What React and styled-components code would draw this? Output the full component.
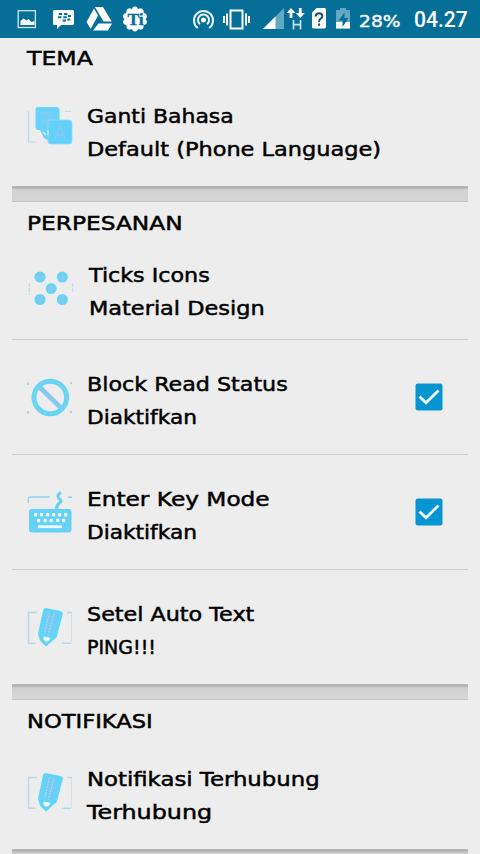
import React, { useLayoutEffect, useRef, useState } from "react";
import styled, { createGlobalStyle } from "styled-components";

const Global = createGlobalStyle`
  body { margin: 0; background: #ededed; overflow: hidden; }
  * { box-sizing: border-box; }
`;

const Screen = styled.div`
  width: 480px;
  height: 854px;
  overflow: hidden;
  background: #ededed;
  color: #000;
  font-family: "DejaVu Sans", sans-serif;
  font-size: 20px;
`;

const StatusBar = styled.header`
  height: 37px;
  background: #056f98;
  box-shadow: 0 1px 0 #056f98;
  display: flex;
  color: #fff;
`;

const StatusIcons = styled.svg`
  width: 357px;
  height: 37px;
  flex: none;
  display: block;
`;

const Battery = styled.span`
  width: 57px;
  padding-left: 2px;
  padding-top: 4px;
  line-height: 36px;
  font-size: 16px;
`;

const Clock = styled.span`
  font-family: Roboto, sans-serif;
  font-weight: 500;
  font-size: 21.5px;
  line-height: 40px;
`;

const List = styled.main`
  padding: 0 12px;
`;

const SectionTitle = styled.h2`
  margin: 0;
  height: 35px;
  padding: 7px 0 0 15px;
  font-size: 20px;
  font-weight: 400;
  line-height: 28px;
`;

const Row = styled.div`
  display: flex;
  align-items: center;
  height: ${(p) => (p.$compact ? 102 : 114)}px;
  padding: 0 25px 0 14px;
`;

const Divider = styled.hr`
  margin: 0;
  border: 0;
  height: 1px;
  background: #cfcfcf;
`;

const Band = styled.div`
  height: 16px;
  background: linear-gradient(#b9b9b9 0, #aeaeae 2px, #c8c8c8 3px, #d3d3d3 5px, #d5d5d5 14.5px, #c4c4c4 15px, #c9c9c9 16px);
`;

const RowIcon = styled.svg`
  width: 48px;
  height: 48px;
  flex: none;
`;

const Labels = styled.div`
  flex: 1;
  padding: 7px 0 0 ${(p) => (p.$inset ? 15 : 13)}px;
`;

const Line = styled.div`
  height: 33px;
  line-height: 33px;
`;

const Stretched = styled.span`
  display: inline-block;
  white-space: nowrap;
  transform-origin: 0 50%;
  -webkit-text-stroke: ${(p) => p.$stroke}px currentColor;
`;

const CheckBox = styled.svg`
  width: 28px;
  height: 28px;
  flex: none;
`;

// Widens the text horizontally until it spans the given width.
function Fit({ width, stroke = 0.5, children }) {
  const ref = useRef(null);
  const [scale, setScale] = useState(1);
  useLayoutEffect(() => {
    setScale(width / ref.current.offsetWidth);
  }, [width]);
  return (
    <Stretched ref={ref} $stroke={stroke} style={{ transform: `scaleX(${scale})` }}>
      {children}
    </Stretched>
  );
}

function LanguageIcon() {
  return (
    <RowIcon viewBox="26 105 48 48">
      <path d="M28.5 111v31h8M65 111.500h6" fill="none" stroke="#b9dcea" strokeWidth="1.2" />
      <rect x="35.500" y="107" width="24" height="23" rx="3" fill="#68d2f8" />
      <path d="M39 128l5 10 7 4V127z" fill="#68d2f8" />
      <rect x="48" y="120" width="24" height="24" rx="2.500" fill="#62d0fa" stroke="#96dcf7" strokeWidth=".8" />
      <path d="M40 113h14M47 111v3M41 124c6-2 9-6 10-10M43 116c2 4 5 6 9 8M55 139l5-13 5 13M57 135h6" fill="none" stroke="#8fc8ef" strokeWidth="1.400" />
      <path d="M43 132l3 3M48 130v5" stroke="#d5f1fb" strokeWidth="1.200" />
    </RowIcon>
  );
}

function TicksIcon() {
  const dots = [[40, 277], [62.3, 277], [51.2, 288.6], [40, 299.500], [62.3, 299.500]];
  return (
    <RowIcon viewBox="26 264 48 48">
      <path d="M29.300 283v12M72.400 283v10" stroke="#b5dcf0" strokeWidth="1" strokeDasharray="4 1" />
      {dots.map(([x, y]) => (
        <g key={`${x}-${y}`}>
          <circle cx={x} cy={y} r="5.500" fill="#68d3f4" />
          <circle cx={x} cy={y} r="2.800" fill="#83caee" />
        </g>
      ))}
    </RowIcon>
  );
}

function BlockIcon() {
  return (
    <RowIcon viewBox="26 373 48 48">
      <path d="M28 382.500v2.500M71 382v2M28 411v2.500M71 411v2" stroke="#a9c4d0" strokeWidth="1.500" />
      <path d="M40 387.500L61 408" stroke="#87c9ea" strokeWidth="4.600" />
      <circle cx="50.300" cy="397.500" r="16.300" fill="none" stroke="#66d5f5" strokeWidth="5" />
      <circle cx="50.300" cy="397.500" r="16.300" fill="none" stroke="#8bd0ee" strokeWidth="1.500" strokeDasharray="2 4" />
    </RowIcon>
  );
}

function KeyboardIcon() {
  const top = [34, 40, 46, 52, 58, 64];
  const mid = [37, 43.500, 49.500, 56, 62];
  return (
    <RowIcon viewBox="26 488 48 48">
      <path d="M28.300 503v-4q0-2 3-2H50M68 497.300h4" fill="none" stroke="#8fd3f0" strokeWidth="1.400" />
      <path d="M56.500 510q0-5 3-7q3-2-.5-4.500q-3-3 2-6" fill="none" stroke="#68d3f4" strokeWidth="3.200" />
      <rect x="29" y="509" width="42.500" height="23.500" rx="3" fill="#66d1f6" />
      {top.map((x) => <rect key={x} x={x} y="513" width="3.300" height="3.600" rx="1" fill="#effaff" />)}
      {mid.map((x) => <rect key={x} x={x} y="518.700" width="3.300" height="3.600" rx="1" fill="#effaff" />)}
      <path d="M38 526.700h24" stroke="#effaff" strokeWidth="2.800" />
      <path d="M32 530h3M66 530h3" stroke="#8cc5ef" strokeWidth="1.500" />
    </RowIcon>
  );
}

function PencilIcon() {
  return (
    <RowIcon viewBox="26 603 48 48">
      <path d="M37 612.500h-8.500v30.700h7M67 612.500h4.700M62 643.200h9" fill="none" stroke="#b5dbea" strokeWidth="1.400" />
      <path d="M71.500 613v30" stroke="#ccdfe7" strokeWidth=".7" />
      <path d="M45.500 608l15 3q3 .8 2.200 3.500l-6 22.500L46 646.500l-6-6L38 634l5-23.500q.5-2.700 2.500-2.500z" fill="#60d4fb" />
      <path d="M47 612l11 2-6 21-9-2z" fill="#78c9f0" />
      <path d="M49.500 612.500l-5 21M54 613.500l-5.500 21" stroke="#a7d8f1" strokeWidth="1.200" strokeDasharray="2 1" />
      <path d="M43.500 636.500l7 1.500-1.500 2.500-3 1.500-2.500-2.500z" fill="#f4fcff" />
    </RowIcon>
  );
}

function Checked() {
  return (
    <CheckBox viewBox="0 0 28 28">
      <rect x=".5" y=".5" width="27" height="27" rx="2.300" fill="#0795d2" />
      <path d="M4.500 13.500l6.500 6.300L23.500 7.500" fill="none" stroke="#f4fbff" strokeWidth="2.700" />
    </CheckBox>
  );
}

function Preference({ icon, title, titleWidth, summary, summaryWidth, checked, compact, inset }) {
  return (
    <Row $compact={compact}>
      {icon}
      <Labels $inset={inset}>
        <Line><Fit width={titleWidth}>{title}</Fit></Line>
        <Line><Fit width={summaryWidth}>{summary}</Fit></Line>
      </Labels>
      {checked && <Checked />}
    </Row>
  );
}

const gearTeeth = Array.from({ length: 10 }, (_, i) => i * 36);

function StatusBarIcons() {
  return (
    <StatusIcons viewBox="0 0 357 37" fill="#fff">
      <rect x="18.200" y="10.700" width="17.200" height="16.800" fill="none" stroke="#d3eaf3" strokeWidth="1.300" />
      <path d="M20.500 25v-4l3-2.500 3 2 2-1.500 3 3 3-1v4z" />
      <path d="M54.500 10h18q1.500 0 1.500 1.500v12q0 1.500-1.500 1.500H61l-4 4v-4h-2.500q-1.500 0-1.500-1.500v-12q0-1.500 1.500-1.500z" />
      <path d="M58.700 14h3.500M64 14h3.500M58 17.300h3.500M63.300 17.300h3.500M68 16h3M62.600 20.600h3.500M67.300 19.500h3" stroke="#056f98" strokeWidth="2" />
      <path d="M95 7h8l8.700 14.500h-8.200zM94 8.500l4 7-7.300 13.500-4.200-7zM98.500 23.500h13.500L108 30.500H93z" />
      {gearTeeth.map((a) => <circle key={a} cx="135" cy="9.300" r="2.700" transform={`rotate(${a} 135 19)`} />)}
      <circle cx="135" cy="19" r="10.800" />
      <text x="127.500" y="25" fontFamily="Liberation Serif, serif" fontWeight="700" fontSize="17.5" fill="#056f98" stroke="#056f98" strokeWidth=".4" textLength="16">Ti</text>
      <g fill="none" stroke="#e5f4fa" strokeWidth="2">
        <path d="M197.800 28a9.500 9.500 0 1 1 11.400 0" />
        <path d="M200 24.300a5.500 5.500 0 1 1 7 0" />
      </g>
      <circle cx="203.500" cy="20" r="2.500" />
      <path d="M230.500 10.500h12v18h-12zM227 13.500v12M246 13.500v12M224 16v7M249 16v7" fill="none" stroke="#fff" strokeWidth="2" />
      <path d="M284 8v21h-21z" fill="#63a8c2" />
      <path d="M275.500 16.500V29H263z" />
      <path d="M291 8l4.500 5H292.400v5h-2.800v-5H286.500zM300.300 18l-4.500-5h3.100V8h2.800v5h3.100z" />
      <path d="M293.500 20v9.500M300.500 20v9.500M293.500 24.700h7" stroke="#c9e3ed" strokeWidth="1.700" fill="none" />
      <path d="M316.500 8h8q1.500 0 1.500 1.500v17q0 2-1.500 2h-11q-1.500 0-1.500-2V12.500z" />
      <path d="M315.700 16.500q0-3.200 3.300-3.200t3.300 2.800q0 1.500-1.700 2.700t-1.500 3M319.100 23.500v2.200" fill="none" stroke="#164e66" strokeWidth="2" />
      <path d="M340 8h6v2h4v18.500h-14V10h4z" fill="#63a8c2" />
      <path d="M336 22h14v6.500h-14z" />
      <path d="M344.500 12.500v5.500h4l-6 9v-6.500h-4z" fill="#056f98" />
    </StatusIcons>
  );
}

export default function App() {
  return (
    <>
      <Global />
      <Screen>
        <StatusBar>
          <StatusBarIcons />
          <Battery><Fit width={42} stroke={0.4}>28%</Fit></Battery>
          <Clock><Fit width={54} stroke={0}>04.27</Fit></Clock>
        </StatusBar>
        <List>
          <SectionTitle><Fit width={66}>TEMA</Fit></SectionTitle>
          <Preference icon={<LanguageIcon />} title="Ganti Bahasa" titleWidth={147} summary="Default (Phone Language)" summaryWidth={294} />
          <Band />
          <SectionTitle><Fit width={156}>PERPESANAN</Fit></SectionTitle>
          <Preference compact inset icon={<TicksIcon />} title="Ticks Icons" titleWidth={121} summary="Material Design" summaryWidth={176} />
          <Divider />
          <Preference checked icon={<BlockIcon />} title="Block Read Status" titleWidth={201} summary="Diaktifkan" summaryWidth={109.5} />
          <Divider />
          <Preference checked icon={<KeyboardIcon />} title="Enter Key Mode" titleWidth={182.5} summary="Diaktifkan" summaryWidth={109.5} />
          <Divider />
          <Preference icon={<PencilIcon />} title="Setel Auto Text" titleWidth={167} summary="PING!!!" summaryWidth={68.5} />
          <Band />
          <SectionTitle><Fit width={125.5}>NOTIFIKASI</Fit></SectionTitle>
          <Preference icon={<PencilIcon />} title="Notifikasi Terhubung" titleWidth={232.5} summary="Terhubung" summaryWidth={125} />
          <Band />
        </List>
      </Screen>
    </>
  );
}
